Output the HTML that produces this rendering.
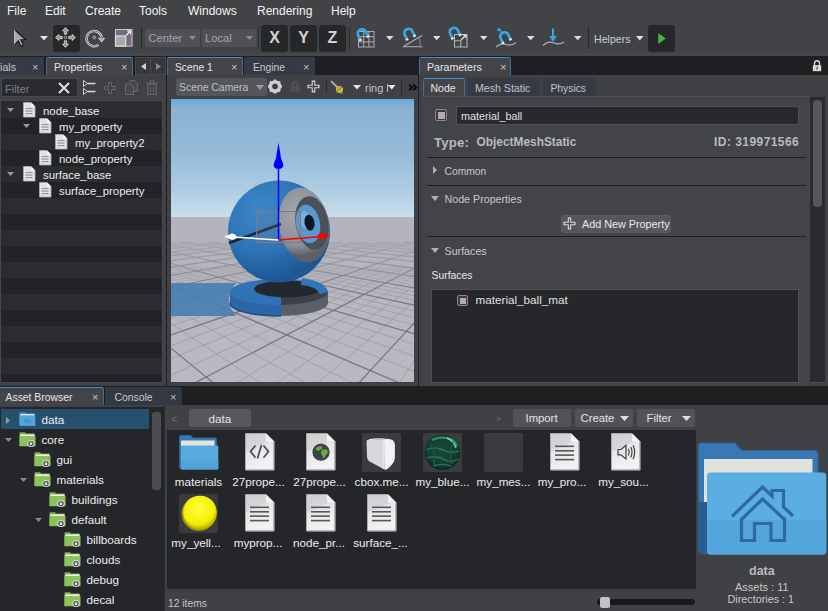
<!DOCTYPE html>
<html><head><meta charset="utf-8"><style>
html,body{margin:0;padding:0;}
body{width:828px;height:611px;overflow:hidden;position:relative;background:#424346;font-family:"Liberation Sans",sans-serif;}
.a{position:absolute;}
.t{white-space:nowrap;}
svg{overflow:visible;}
</style></head><body>
<div class="a" style="left:0px;top:0px;width:828px;height:22px;background:#424346;"></div>
<div class="a t" style="left:7px;top:4.84px;font-size:12px;line-height:12px;color:#f4f4f4;">File</div>
<div class="a t" style="left:45px;top:4.84px;font-size:12px;line-height:12px;color:#f4f4f4;">Edit</div>
<div class="a t" style="left:85px;top:4.84px;font-size:12px;line-height:12px;color:#f4f4f4;">Create</div>
<div class="a t" style="left:139px;top:4.84px;font-size:12px;line-height:12px;color:#f4f4f4;">Tools</div>
<div class="a t" style="left:188px;top:4.84px;font-size:12px;line-height:12px;color:#f4f4f4;">Windows</div>
<div class="a t" style="left:257px;top:4.84px;font-size:12px;line-height:12px;color:#f4f4f4;">Rendering</div>
<div class="a t" style="left:331px;top:4.84px;font-size:12px;line-height:12px;color:#f4f4f4;">Help</div>
<div class="a" style="left:0px;top:22px;width:828px;height:32px;background:#424346;"></div>
<div class="a" style="left:0px;top:54px;width:828px;height:1px;background:#4a4b4e;"></div>
<svg class="a" style="left:14px;top:29px;" width="13" height="18" viewBox="0 0 13 18"><path d="M0.5 0.8V15.5L4.3 11.8L7.1 17.2L9.5 16L6.8 10.8H11.8Z" fill="#a9a9b1"/><path d="M0.8 1L11.8 10.8H6.8L9.5 16L7.1 17.2L4.3 11.8L0.8 15.3" fill="none" stroke="#141416" stroke-width="1.1"/><path d="M0.6 1V15" stroke="#b8b8c0" stroke-width="1.1"/></svg>
<svg class="a" style="left:39.5px;top:35.8px;" width="8" height="4.5" viewBox="0 0 8 4.5"><path d="M0 0H8L4.0 4.5Z" fill="#e2e2e2"/></svg>
<div class="a" style="left:53px;top:25px;width:27px;height:27px;background:#262729;border-radius:3px;"></div>
<svg class="a" style="left:55px;top:27px;" width="21" height="21" viewBox="0 0 21 21"><g fill="#8c8c90" stroke="#d6d6d6" stroke-width="0.9" stroke-linejoin="round"><path d="M10.5 0.6L13.5 3.8H11.7V7.2H9.3V3.8H7.5Z"/><path d="M10.5 20.4L13.5 17.2H11.7V13.8H9.3V17.2H7.5Z"/><path d="M0.6 10.5L3.8 7.5V9.3H7.2V11.7H3.8V13.5Z"/><path d="M20.4 10.5L17.2 7.5V9.3H13.8V11.7H17.2V13.5Z"/></g><circle cx="10.5" cy="10.5" r="1.3" fill="none" stroke="#c8c8c8" stroke-width="0.8"/></svg>
<svg class="a" style="left:85px;top:28px;" width="21" height="20" viewBox="0 0 21 20"><path d="M13.5 16.8A7.6 7.6 0 1 1 16.6 9.2" fill="none" stroke="#d0d0d4" stroke-width="2.6"/><path d="M13.5 16.8A7.6 7.6 0 1 1 16.6 9.2" fill="none" stroke="#7a6a82" stroke-width="1"/><path d="M13.6 10.2H19.6L16.6 14.2Z" fill="#9a9aa0" stroke="#d8d8d8" stroke-width="0.9"/><circle cx="9.4" cy="9.4" r="1.3" fill="none" stroke="#c8c8c8" stroke-width="0.9"/></svg>
<svg class="a" style="left:115px;top:29px;" width="18" height="18" viewBox="0 0 18 18"><rect x="0.5" y="0.5" width="16.6" height="16.6" fill="#7b6a84" stroke="#c8c8cc" stroke-width="1"/><rect x="0.5" y="7" width="10.2" height="10.1" fill="#a8a8ae" stroke="#dedede" stroke-width="1.2"/><path d="M11 6.5L15.6 1.9M12.2 1.9H15.6V5.3" fill="none" stroke="#f0f0f0" stroke-width="1.2"/></svg>
<div class="a" style="left:141px;top:27px;width:1px;height:22px;background:#2a2b2e;"></div>
<div class="a" style="left:145px;top:29px;width:55px;height:18px;background:#505155;border-radius:2px;"></div>
<div class="a t" style="left:148.5px;top:33.02px;font-size:11.2px;line-height:11.2px;color:#a4a6ac;">Center</div>
<svg class="a" style="left:189px;top:35.5px;" width="7" height="4" viewBox="0 0 7 4"><path d="M0 0H7L3.5 4Z" fill="#8a8a90"/></svg>
<div class="a" style="left:202px;top:29px;width:54px;height:18px;background:#505155;border-radius:2px;"></div>
<div class="a t" style="left:205px;top:33.02px;font-size:11.2px;line-height:11.2px;color:#a4a6ac;">Local</div>
<svg class="a" style="left:246px;top:35.5px;" width="7" height="4" viewBox="0 0 7 4"><path d="M0 0H7L3.5 4Z" fill="#8a8a90"/></svg>
<div class="a" style="left:258px;top:27px;width:1px;height:22px;background:#2a2b2e;"></div>
<div class="a" style="left:261px;top:25px;width:27px;height:27px;background:#262729;border-radius:3px;"></div>
<div class="a t" style="left:261px;top:29.5px;width:27px;text-align:center;font-size:16px;line-height:16px;font-weight:bold;color:#d4d4d4;">X</div>
<div class="a" style="left:290px;top:25px;width:27px;height:27px;background:#262729;border-radius:3px;"></div>
<div class="a t" style="left:290px;top:29.5px;width:27px;text-align:center;font-size:16px;line-height:16px;font-weight:bold;color:#d4d4d4;">Y</div>
<div class="a" style="left:319px;top:25px;width:27px;height:27px;background:#262729;border-radius:3px;"></div>
<div class="a t" style="left:319px;top:29.5px;width:27px;text-align:center;font-size:16px;line-height:16px;font-weight:bold;color:#d4d4d4;">Z</div>
<div class="a" style="left:349px;top:27px;width:1px;height:22px;background:#2a2b2e;"></div>
<svg class="a" style="left:355px;top:28px;" width="21" height="20" viewBox="0 0 21 20"><g stroke="#ababab" stroke-width="1" fill="none"><rect x="3.5" y="3.5" width="15.5" height="15.5"/><path d="M8.7 3.5V19M13.9 3.5V19M3.5 8.7H19M3.5 13.9H19"/></g><g transform="translate(7.0 5.6) rotate(-25) scale(1.0)"><path d="M-4.2 5V0A4.2 4.2 0 0 1 4.2 0V5" fill="none" stroke="#3aa6dc" stroke-width="2.8"/><path d="M-4.2 4.2V6.2M4.2 4.2V6.2" stroke="#d8eef8" stroke-width="2.8"/></g></svg>
<svg class="a" style="left:386px;top:35.8px;" width="7.5" height="4.2" viewBox="0 0 7.5 4.2"><path d="M0 0H7.5L3.75 4.2Z" fill="#dedede"/></svg>
<svg class="a" style="left:402px;top:28px;" width="21" height="20" viewBox="0 0 21 20"><path d="M1 18.7H20.5M1 18.7L20 7.5" stroke="#b0b0b0" stroke-width="1.1" fill="none"/><path d="M16.5 9.6Q18.6 12.5 18 14.5M18 14.5V18" stroke="#9a8aa0" stroke-width="0.9" fill="none"/><g transform="translate(6.6 5.0) rotate(-25) scale(1.0)"><path d="M-4.2 5V0A4.2 4.2 0 0 1 4.2 0V5" fill="none" stroke="#3aa6dc" stroke-width="2.8"/><path d="M-4.2 4.2V6.2M4.2 4.2V6.2" stroke="#d8eef8" stroke-width="2.8"/></g></svg>
<svg class="a" style="left:432.5px;top:35.8px;" width="7.5" height="4.2" viewBox="0 0 7.5 4.2"><path d="M0 0H7.5L3.75 4.2Z" fill="#dedede"/></svg>
<svg class="a" style="left:448px;top:27px;" width="20" height="21" viewBox="0 0 20 21"><g stroke="#b0b0b0" stroke-width="1.1" fill="none"><rect x="6.5" y="7.5" width="12.5" height="12.5"/><path d="M6.5 13.8H12.8V20"/></g><path d="M13 13L18 8M14.8 8H18V11.2" stroke="#e8e8e8" stroke-width="1.1" fill="none"/><g transform="translate(6.0 5.0) rotate(-25) scale(1.0)"><path d="M-4.2 5V0A4.2 4.2 0 0 1 4.2 0V5" fill="none" stroke="#3aa6dc" stroke-width="2.8"/><path d="M-4.2 4.2V6.2M4.2 4.2V6.2" stroke="#d8eef8" stroke-width="2.8"/></g></svg>
<svg class="a" style="left:480px;top:36px;" width="7.5" height="4.2" viewBox="0 0 7.5 4.2"><path d="M0 0H7.5L3.75 4.2Z" fill="#dedede"/></svg>
<svg class="a" style="left:495px;top:27px;" width="22" height="21" viewBox="0 0 22 21"><path d="M1 20Q6 15.5 11 17.5Q16 19.5 21 15.5" stroke="#b0b0b0" stroke-width="1.2" fill="none"/><g transform="translate(9.5 9.5) rotate(-25) scale(1.0)"><path d="M-4.2 5V0A4.2 4.2 0 0 1 4.2 0V5" fill="none" stroke="#3aa6dc" stroke-width="2.8"/><path d="M-4.2 4.2V6.2M4.2 4.2V6.2" stroke="#d8eef8" stroke-width="2.8"/></g><path d="M7.5 7L4.2 2.2" stroke="#3aa6dc" stroke-width="1.4"/><path d="M1.8 4.2L3.2 0.6L6.4 2.6Z" fill="#3aa6dc"/></svg>
<svg class="a" style="left:527px;top:36px;" width="7.5" height="4.2" viewBox="0 0 7.5 4.2"><path d="M0 0H7.5L3.75 4.2Z" fill="#dedede"/></svg>
<svg class="a" style="left:542px;top:27px;" width="23" height="21" viewBox="0 0 23 21"><path d="M1 18.5Q6 13.5 11.5 15.8Q17 18.5 22 15" stroke="#b0b0b0" stroke-width="1.2" fill="none"/><path d="M11 1.5V10" stroke="#3aa6dc" stroke-width="2"/><path d="M7.2 9H14.8L11 15Z" fill="#3aa6dc"/></svg>
<svg class="a" style="left:574px;top:36px;" width="7.5" height="4.2" viewBox="0 0 7.5 4.2"><path d="M0 0H7.5L3.75 4.2Z" fill="#dedede"/></svg>
<div class="a" style="left:588px;top:27px;width:1px;height:22px;background:#2a2b2e;"></div>
<div class="a t" style="left:594px;top:33.83px;font-size:10.6px;line-height:10.6px;color:#c8ccd4;">Helpers</div>
<svg class="a" style="left:635.5px;top:36px;" width="7.5" height="4.5" viewBox="0 0 7.5 4.5"><path d="M0 0H7.5L3.75 4.5Z" fill="#e2e2e2"/></svg>
<div class="a" style="left:648px;top:25px;width:27px;height:27px;background:#262729;border-radius:3px;"></div>
<svg class="a" style="left:658px;top:33px;" width="8" height="11" viewBox="0 0 8 11"><path d="M0.5 0.5V10.5L7.5 5.5Z" fill="#3dc23d" stroke="#6a8a6a" stroke-width="0.6"/></svg>
<div class="a" style="left:0px;top:56px;width:828px;height:330px;background:#1f1f21;"></div>
<!--LEFT-->
<div class="a" style="left:0px;top:57px;width:44px;height:18px;background:#353a45;"></div>
<div class="a t" style="left:-27px;top:62.03px;font-size:10.6px;line-height:10.6px;color:#c8c8c8;">Materials</div>
<div class="a t" style="left:32px;top:62.19px;font-size:11px;line-height:11px;color:#c0c0c0;">&#215;</div>
<div class="a" style="left:46px;top:57px;width:87px;height:18px;background:#434448;border-top:1px solid #3f8fcf;border-left:1px solid #3a6f9a;border-right:1px solid #3a6f9a;box-sizing:border-box;border-radius:2px 2px 0 0;"></div>
<div class="a t" style="left:54px;top:62.03px;font-size:10.6px;line-height:10.6px;color:#e6e6e6;">Properties</div>
<div class="a t" style="left:121px;top:62.19px;font-size:11px;line-height:11px;color:#c8c8c8;">&#215;</div>
<div class="a" style="left:135px;top:57px;width:31px;height:18px;background:#37383b;border:1px solid #4a4b4f;box-sizing:border-box;"></div>
<div class="a" style="left:150px;top:58px;width:1px;height:16px;background:#4a4b4f;"></div>
<svg class="a" style="left:141px;top:63px;" width="5" height="7" viewBox="0 0 5 7"><path d="M5 0V7L0 3.5Z" fill="#d0d0d0"/></svg>
<svg class="a" style="left:156px;top:63px;" width="5" height="7" viewBox="0 0 5 7"><path d="M0 0V7L5 3.5Z" fill="#8a8a8a"/></svg>
<div class="a" style="left:0px;top:75px;width:166px;height:311px;background:#404144;"></div>
<div class="a" style="left:1px;top:78px;width:77px;height:19px;background:#2a2b2e;border:1px solid #48494d;box-sizing:border-box;"></div>
<div class="a t" style="left:5px;top:83.69px;font-size:11px;line-height:11px;color:#7c7f86;">Filter</div>
<svg class="a" style="left:58px;top:82px;" width="12" height="12" viewBox="0 0 12 12"><path d="M1 1L11 11M11 1L1 11" stroke="#e0e0e0" stroke-width="2"/></svg>
<svg class="a" style="left:82px;top:79px;" width="14" height="16" viewBox="0 0 14 16"><g fill="none" stroke="#d0d0d0" stroke-width="1"><path d="M1.5 1.5V7.5L5.5 4.5Z"/><path d="M1.5 9.5V15.5L5.5 12.5Z"/></g><path d="M5.5 4.5H13.5M5.5 12.5H13.5" stroke="#dcdcdc" stroke-width="1.3"/></svg>
<svg class="a" style="left:104px;top:82px;" width="12" height="12" viewBox="0 0 12 12"><path d="M4.5 0.5H7.5V4.5H11.5V7.5H7.5V11.5H4.5V7.5H0.5V4.5H4.5Z" fill="none" stroke="#66676c" stroke-width="1"/></svg>
<svg class="a" style="left:125px;top:80px;" width="13" height="15" viewBox="0 0 13 15"><path d="M5 0.5H9.5L12.5 3.5V11.5H5Z" fill="#48494e" stroke="#66676c" stroke-width="1"/><path d="M0.5 4H5.5L8.5 7V14.5H0.5Z" fill="#48494e" stroke="#66676c" stroke-width="1"/></svg>
<svg class="a" style="left:146px;top:80px;" width="12" height="15" viewBox="0 0 12 15"><path d="M0.5 3H11.5M4 3V1H8V3" stroke="#66676c" stroke-width="1.2" fill="none"/><path d="M1.8 4.5H10.2V14.3H1.8Z" fill="none" stroke="#66676c" stroke-width="1.2"/><path d="M4.5 6.5V12.5M7.5 6.5V12.5" stroke="#66676c" stroke-width="1"/></svg>
<div class="a" style="left:0px;top:100px;width:163px;height:283px;background:#2b2c2f;border:1px solid #48494c;box-sizing:border-box;"></div>
<div class="a" style="left:1px;top:102px;width:161px;height:16px;background:#2b2c2f;"></div>
<div class="a" style="left:1px;top:118px;width:161px;height:16px;background:#222326;"></div>
<div class="a" style="left:1px;top:134px;width:161px;height:16px;background:#2b2c2f;"></div>
<div class="a" style="left:1px;top:150px;width:161px;height:16px;background:#222326;"></div>
<div class="a" style="left:1px;top:166px;width:161px;height:16px;background:#2b2c2f;"></div>
<div class="a" style="left:1px;top:182px;width:161px;height:16px;background:#222326;"></div>
<div class="a" style="left:1px;top:198px;width:161px;height:16px;background:#2b2c2f;"></div>
<div class="a" style="left:1px;top:214px;width:161px;height:16px;background:#222326;"></div>
<div class="a" style="left:1px;top:230px;width:161px;height:16px;background:#2b2c2f;"></div>
<div class="a" style="left:1px;top:246px;width:161px;height:16px;background:#222326;"></div>
<div class="a" style="left:1px;top:262px;width:161px;height:16px;background:#2b2c2f;"></div>
<div class="a" style="left:1px;top:278px;width:161px;height:16px;background:#222326;"></div>
<div class="a" style="left:1px;top:294px;width:161px;height:16px;background:#2b2c2f;"></div>
<div class="a" style="left:1px;top:310px;width:161px;height:16px;background:#222326;"></div>
<div class="a" style="left:1px;top:326px;width:161px;height:16px;background:#2b2c2f;"></div>
<div class="a" style="left:1px;top:342px;width:161px;height:16px;background:#222326;"></div>
<div class="a" style="left:1px;top:358px;width:161px;height:16px;background:#2b2c2f;"></div>
<div class="a" style="left:1px;top:374px;width:161px;height:8px;background:#222326;"></div>
<svg class="a" style="left:7px;top:108px;" width="7" height="4" viewBox="0 0 7 4"><path d="M0 0H7L3.5 4Z" fill="#9a9a9a"/></svg>
<svg class="a" style="left:23px;top:102px" width="13" height="16" viewBox="0 0 13 16"><path d="M0.5 0.5H8L12 4.5V15H0.5Z" fill="#e2e2e4" stroke="#b0b0b4" stroke-width="0.8"/><path d="M8 0.5V4.5H12Z" fill="#f6f6f6"/><rect x="2.5" y="6" width="7" height="1.2" fill="#9a9aa0"/><rect x="2.5" y="8.5" width="7" height="1.2" fill="#9a9aa0"/><rect x="2.5" y="11" width="7" height="1.2" fill="#9a9aa0"/></svg>
<div class="a t" style="left:43px;top:105.85px;font-size:11.4px;line-height:11.4px;color:#ececec;">node_base</div>
<svg class="a" style="left:23px;top:124px;" width="7" height="4" viewBox="0 0 7 4"><path d="M0 0H7L3.5 4Z" fill="#9a9a9a"/></svg>
<svg class="a" style="left:39px;top:118px" width="13" height="16" viewBox="0 0 13 16"><path d="M0.5 0.5H8L12 4.5V15H0.5Z" fill="#e2e2e4" stroke="#b0b0b4" stroke-width="0.8"/><path d="M8 0.5V4.5H12Z" fill="#f6f6f6"/><rect x="2.5" y="6" width="7" height="1.2" fill="#9a9aa0"/><rect x="2.5" y="8.5" width="7" height="1.2" fill="#9a9aa0"/><rect x="2.5" y="11" width="7" height="1.2" fill="#9a9aa0"/></svg>
<div class="a t" style="left:59px;top:121.85px;font-size:11.4px;line-height:11.4px;color:#ececec;">my_property</div>
<svg class="a" style="left:55px;top:134px" width="13" height="16" viewBox="0 0 13 16"><path d="M0.5 0.5H8L12 4.5V15H0.5Z" fill="#e2e2e4" stroke="#b0b0b4" stroke-width="0.8"/><path d="M8 0.5V4.5H12Z" fill="#f6f6f6"/><rect x="2.5" y="6" width="7" height="1.2" fill="#9a9aa0"/><rect x="2.5" y="8.5" width="7" height="1.2" fill="#9a9aa0"/><rect x="2.5" y="11" width="7" height="1.2" fill="#9a9aa0"/></svg>
<div class="a t" style="left:75px;top:137.85px;font-size:11.4px;line-height:11.4px;color:#ececec;">my_property2</div>
<svg class="a" style="left:39px;top:150px" width="13" height="16" viewBox="0 0 13 16"><path d="M0.5 0.5H8L12 4.5V15H0.5Z" fill="#e2e2e4" stroke="#b0b0b4" stroke-width="0.8"/><path d="M8 0.5V4.5H12Z" fill="#f6f6f6"/><rect x="2.5" y="6" width="7" height="1.2" fill="#9a9aa0"/><rect x="2.5" y="8.5" width="7" height="1.2" fill="#9a9aa0"/><rect x="2.5" y="11" width="7" height="1.2" fill="#9a9aa0"/></svg>
<div class="a t" style="left:59px;top:153.85px;font-size:11.4px;line-height:11.4px;color:#ececec;">node_property</div>
<svg class="a" style="left:7px;top:172px;" width="7" height="4" viewBox="0 0 7 4"><path d="M0 0H7L3.5 4Z" fill="#9a9a9a"/></svg>
<svg class="a" style="left:23px;top:166px" width="13" height="16" viewBox="0 0 13 16"><path d="M0.5 0.5H8L12 4.5V15H0.5Z" fill="#e2e2e4" stroke="#b0b0b4" stroke-width="0.8"/><path d="M8 0.5V4.5H12Z" fill="#f6f6f6"/><rect x="2.5" y="6" width="7" height="1.2" fill="#9a9aa0"/><rect x="2.5" y="8.5" width="7" height="1.2" fill="#9a9aa0"/><rect x="2.5" y="11" width="7" height="1.2" fill="#9a9aa0"/></svg>
<div class="a t" style="left:43px;top:169.85px;font-size:11.4px;line-height:11.4px;color:#ececec;">surface_base</div>
<svg class="a" style="left:39px;top:182px" width="13" height="16" viewBox="0 0 13 16"><path d="M0.5 0.5H8L12 4.5V15H0.5Z" fill="#e2e2e4" stroke="#b0b0b4" stroke-width="0.8"/><path d="M8 0.5V4.5H12Z" fill="#f6f6f6"/><rect x="2.5" y="6" width="7" height="1.2" fill="#9a9aa0"/><rect x="2.5" y="8.5" width="7" height="1.2" fill="#9a9aa0"/><rect x="2.5" y="11" width="7" height="1.2" fill="#9a9aa0"/></svg>
<div class="a t" style="left:59px;top:185.85px;font-size:11.4px;line-height:11.4px;color:#ececec;">surface_property</div>
<!--SCENE-->
<div class="a" style="left:167px;top:57px;width:76px;height:18px;background:#434448;border-top:1px solid #3f8fcf;border-left:1px solid #3a6f9a;border-right:1px solid #3a6f9a;box-sizing:border-box;border-radius:2px 2px 0 0;"></div>
<div class="a t" style="left:175px;top:63.08px;font-size:10.3px;line-height:10.3px;color:#e6e6e6;">Scene 1</div>
<div class="a t" style="left:231px;top:62.19px;font-size:11px;line-height:11px;color:#c8c8c8;">&#215;</div>
<div class="a" style="left:244px;top:57px;width:71px;height:18px;background:#353a45;border-radius:2px 2px 0 0;"></div>
<div class="a t" style="left:253px;top:63.08px;font-size:10.3px;line-height:10.3px;color:#c8c8c8;">Engine</div>
<div class="a t" style="left:303px;top:62.19px;font-size:11px;line-height:11px;color:#c0c0c0;">&#215;</div>
<div class="a" style="left:167px;top:75px;width:251px;height:311px;background:#404144;"></div>
<div class="a" style="left:176px;top:78px;width:91px;height:18px;background:#55565a;border-radius:3px;"></div>
<div class="a t" style="left:179px;top:83.20px;font-size:10.4px;line-height:10.4px;color:#bcc0c6;">Scene Camera</div>
<svg class="a" style="left:256px;top:85px;" width="8" height="5" viewBox="0 0 8 5"><path d="M0 0H8L4.0 5Z" fill="#9a9a9a"/></svg>
<svg class="a" style="left:268px;top:79px;" width="14" height="15" viewBox="0 0 14 15"><g transform="translate(7 7.5)"><circle r="5" fill="none" stroke="#cfcfcf" stroke-width="2.6"/><g stroke="#cfcfcf" stroke-width="2.4"><path d="M0 -7V7M-7 0H7M-5 -5L5 5M5 -5L-5 5"/></g><circle r="2.8" fill="#3d3e42"/></g></svg>
<svg class="a" style="left:290px;top:81px;" width="10" height="11" viewBox="0 0 10 11"><path d="M2.5 5V3Q2.5 0.8 5 0.8Q7.5 0.8 7.5 3V5" fill="none" stroke="#58595e" stroke-width="1.2"/><rect x="0.5" y="5" width="9" height="5.5" fill="#4e4f54"/></svg>
<svg class="a" style="left:307px;top:80px;" width="13" height="13" viewBox="0 0 13 13"><path d="M6.5 0.5V12.5M0.5 6.5H12.5" stroke="#d8d8d8" stroke-width="3.6"/><path d="M6.5 1.8V11.2M1.8 6.5H11.2" stroke="#3d3e42" stroke-width="1.4"/></svg>
<div class="a" style="left:326px;top:80px;width:1px;height:14px;background:#2a2b2e;"></div>
<svg class="a" style="left:330px;top:80px;" width="14" height="14" viewBox="0 0 14 14"><path d="M1 1L8 8" stroke="#9a8aa8" stroke-width="2.2"/><path d="M1.5 1.5L8 8" stroke="#d0c8d8" stroke-width="0.8"/><circle cx="9.5" cy="9.5" r="3.6" fill="#c8b830"/><path d="M7 11L12 7" stroke="#6a6a40" stroke-width="1"/><path d="M10 13L13 13" stroke="#9a8aa8" stroke-width="1"/></svg>
<svg class="a" style="left:352.5px;top:84.5px;" width="8" height="4.5" viewBox="0 0 8 4.5"><path d="M0 0H8L4.0 4.5Z" fill="#e2e2e2"/></svg>
<div class="a t" style="left:365px;top:82.69px;font-size:11px;line-height:11px;color:#c0c0c4;">ring</div>
<div class="a" style="left:386.5px;top:84px;width:1.5px;height:8px;background:#c8c4a8;"></div>
<svg class="a" style="left:388px;top:84.7px;" width="7.5" height="4.5" viewBox="0 0 7.5 4.5"><path d="M0 0H7.5L3.75 4.5Z" fill="#f0f0f0"/></svg>
<div class="a" style="left:401px;top:79px;width:1px;height:16px;background:#2a2b2e;"></div>
<svg class="a" style="left:408px;top:84px;" width="10" height="7" viewBox="0 0 10 7"><path d="M1 0.8L4.2 3.5L1 6.2M5.2 0.8L8.4 3.5L5.2 6.2" fill="none" stroke="#0a0a0c" stroke-width="1.8"/></svg>
<svg class="a" style="left:0;top:0" width="828" height="611"><defs><linearGradient id="sky" x1="0" y1="99" x2="0" y2="217" gradientUnits="userSpaceOnUse"><stop offset="0" stop-color="#6ea8da"/><stop offset="0.04" stop-color="#78aed8"/><stop offset="0.08" stop-color="#8ab2d2"/><stop offset="0.45" stop-color="#94bad8"/><stop offset="0.8" stop-color="#b2cfe4"/><stop offset="1" stop-color="#cadeec"/></linearGradient><linearGradient id="floor" x1="0" y1="217" x2="0" y2="382" gradientUnits="userSpaceOnUse"><stop offset="0" stop-color="#aeaeb6"/><stop offset="0.3" stop-color="#b6b6be"/><stop offset="1" stop-color="#b9b9c1"/></linearGradient><radialGradient id="ball" cx="262" cy="210" r="70" gradientUnits="userSpaceOnUse"><stop offset="0" stop-color="#3a88c8"/><stop offset="0.6" stop-color="#2e74b4"/><stop offset="1" stop-color="#1d5894"/></radialGradient><radialGradient id="ring" cx="300" cy="215" r="40" gradientUnits="userSpaceOnUse"><stop offset="0" stop-color="#a8acb4"/><stop offset="0.75" stop-color="#8c9098"/><stop offset="1" stop-color="#5c6068"/></radialGradient><linearGradient id="haze" x1="0" y1="217" x2="0" y2="300" gradientUnits="userSpaceOnUse"><stop offset="0" stop-color="#b4b4bc" stop-opacity="1"/><stop offset="0.35" stop-color="#b4b4bc" stop-opacity="0.75"/><stop offset="1" stop-color="#b6b6be" stop-opacity="0"/></linearGradient><clipPath id="vpclip"><rect x="171" y="99" width="243" height="283"/></clipPath></defs><g clip-path="url(#vpclip)"><rect x="171" y="99" width="243" height="118" fill="url(#sky)"/><rect x="171" y="217" width="243" height="165" fill="url(#floor)"/><g fill="none"><path stroke="#96949e" stroke-width="0.9" opacity="0.7" d="M-1192 466L171 267M-1131 466L183 267M-1069 466L196 267M-1008 466L208 267M-946 466L220 267M-885 466L233 267M-823 466L245 267M-762 466L257 267M-701 466L269 267M-639 466L282 267M-578 466L294 267M-516 466L306 267M-455 466L319 267M-394 466L331 267M-332 466L343 267M-271 466L355 267M-209 466L368 267M-148 466L380 267M-87 466L392 267M-25 466L405 267M36 466L417 267M98 466L429 267M159 466L441 267M220 466L454 267M282 466L466 267M343 466L478 267M405 466L491 267"/><path stroke="#96949e" stroke-width="0.9" opacity="0.7" d="M176 466L44 267M246 466L58 267M315 466L72 267M385 466L86 267M454 466L100 267M524 466L114 267M594 466L128 267M663 466L141 267M733 466L155 267M802 466L169 267M872 466L183 267M941 466L197 267M1011 466L211 267M1080 466L225 267M1150 466L239 267M1219 466L253 267M1289 466L267 267M1358 466L280 267M1428 466L294 267M1497 466L308 267M1567 466L322 267M1636 466L336 267M1706 466L350 267M1775 466L364 267M1845 466L378 267M1915 466L392 267M1984 466L406 267"/><path stroke="#76707e" stroke-width="1.3" opacity="0.85" d="M-2666 466L194 242M-2420 466L219 242M-2174 466L243 242M-1929 466L268 242M-1683 466L292 242M-1438 466L317 242M-1192 466L342 242M-946 466L366 242M-701 466L391 242M-455 466L415 242M-209 466L440 242M36 466L464 242M282 466L489 242"/><path stroke="#76707e" stroke-width="1.3" opacity="0.85" d="M315 466L41 242M594 466L69 242M872 466L97 242M1150 466L125 242M1428 466L153 242M1706 466L180 242M1984 466L208 242M2262 466L236 242M2540 466L264 242M2818 466L292 242M3097 466L320 242M3375 466L347 242M3653 466L375 242M3931 466L403 242"/></g><rect x="171" y="217" width="243" height="83" fill="url(#haze)"/><path d="M171 283H236Q222 300 236 316H171Z" fill="#4a80b2" opacity="0.92"/><path d="M230 292V303A49 13 0 0 0 328 303V292Z" fill="#5a5e66"/><path d="M230 292V303A49 13 0 0 0 281 316V305A49 13 0 0 1 230 292Z" fill="#2a66a8"/><ellipse cx="279" cy="292" rx="49" ry="13" fill="#2f72b6"/><path d="M281 305A49 13 0 0 0 328 292L318 289L281 297Z" fill="#3c4048"/><ellipse cx="287" cy="289" rx="33" ry="8.5" fill="#23272e"/><path d="M302 278Q325 281 328 292L320 294Q316 286 301 285Z" fill="#3276ba"/><path d="M230 303A49 13 0 0 0 281 316" fill="none" stroke="#1e4e84" stroke-width="1.5"/><circle cx="279" cy="231.5" r="51" fill="url(#ball)"/><ellipse cx="304" cy="225" rx="25" ry="37.5" transform="rotate(-10 304 225)" fill="url(#ring)"/><ellipse cx="312" cy="223" rx="16.5" ry="27" transform="rotate(-10 312 223)" fill="#4c5058"/><ellipse cx="308" cy="224" rx="12" ry="19.5" transform="rotate(-10 308 224)" fill="#5898ce"/><ellipse cx="305" cy="220" rx="5" ry="9" transform="rotate(-10 305 220)" fill="#8cc0e8" opacity="0.6"/><ellipse cx="309.5" cy="222.7" rx="5" ry="8" transform="rotate(-10 309.5 222.7)" fill="#0a1826"/><path d="M229 243L281 224" stroke="#141a22" stroke-width="2.4" opacity="0.85"/><rect x="256.5" y="211.5" width="44" height="31" fill="#a08090" fill-opacity="0.15" stroke="#8a7482" stroke-width="1"/><path d="M278.5 168V240" stroke="#0000ff" stroke-width="1.5"/><path d="M278.5 142.5L281 158L283.5 165Q283 169 278.5 169Q274 169 273.5 165L276 158Z" fill="#0000ff"/><path d="M278.5 240L225 236.5" stroke="#ffffff" stroke-width="1.5"/><path d="M224.5 236.5L232 233.5Q236 234 236.5 236.8Q236 239.6 232 240Z" fill="#ffffff"/><path d="M278.5 240L322 236.5" stroke="#ff0000" stroke-width="1.5"/><path d="M330 236L322 233Q318 233.5 317.5 236.3Q318 239 322 239.5Z" fill="#ff0000"/></g></svg>
<!--PARAMS-->
<div class="a" style="left:419px;top:57px;width:92px;height:18px;background:#434448;border-top:1px solid #3f8fcf;border-left:1px solid #3a6f9a;border-right:1px solid #3a6f9a;box-sizing:border-box;border-radius:2px 2px 0 0;"></div>
<div class="a t" style="left:427px;top:62.03px;font-size:10.6px;line-height:10.6px;color:#e6e6e6;">Parameters</div>
<div class="a t" style="left:500px;top:62.19px;font-size:11px;line-height:11px;color:#c8c8c8;">&#215;</div>
<div class="a" style="left:419px;top:75px;width:409px;height:311px;background:#404144;"></div>
<div class="a" style="left:423px;top:78px;width:42px;height:18px;background:#434448;border-top:1px solid #3f8fcf;border-left:1px solid #3a6f9a;border-right:1px solid #3a6f9a;box-sizing:border-box;border-radius:2px 2px 0 0;"></div>
<div class="a t" style="left:430.5px;top:83.11px;font-size:10.5px;line-height:10.5px;color:#e6e6e6;">Node</div>
<div class="a" style="left:468px;top:78px;width:72px;height:18px;background:#353a45;border-radius:2px 2px 0 0;"></div>
<div class="a t" style="left:475px;top:83.03px;font-size:10.6px;line-height:10.6px;color:#c4c4c4;">Mesh Static</div>
<div class="a" style="left:543px;top:78px;width:53px;height:18px;background:#353a45;border-radius:2px 2px 0 0;"></div>
<div class="a t" style="left:550.5px;top:84.18px;font-size:10.3px;line-height:10.3px;color:#c4c4c4;">Physics</div>
<div class="a" style="left:423px;top:96px;width:387px;height:290px;background:#434447;border-top:1px solid #505155;box-sizing:border-box;"></div>
<div class="a" style="left:435px;top:109px;width:12px;height:12px;background:#3a3b3e;border:1px solid #9a80a0;box-sizing:border-box;border-radius:2px;"></div>
<div class="a" style="left:437.5px;top:111.5px;width:7px;height:7px;background:#b4acac;"></div>
<div class="a" style="left:456px;top:106px;width:343px;height:19px;background:#28292c;border:1px solid #505155;box-sizing:border-box;"></div>
<div class="a t" style="left:461px;top:110.86px;font-size:10.8px;line-height:10.8px;color:#e0e0e0;">material_ball</div>
<div class="a t" style="left:434px;top:135.83px;font-size:13.2px;line-height:13.2px;color:#b6bac2;font-weight:bold;letter-spacing:0.2px;">Type:</div>
<div class="a t" style="left:476.5px;top:136.93px;font-size:11.9px;line-height:11.9px;color:#b6bac2;font-weight:bold;">ObjectMeshStatic</div>
<div class="a t" style="left:714px;top:135.84px;font-size:12px;line-height:12px;color:#b6bac2;font-weight:bold;letter-spacing:0.45px;">ID: 319971566</div>
<div class="a" style="left:427px;top:157px;width:379px;height:1px;background:#1f2022;"></div>
<svg class="a" style="left:433px;top:166px;" width="4" height="8" viewBox="0 0 4 8"><path d="M0 0V8L4 4.0Z" fill="#b0b0b0"/></svg>
<div class="a t" style="left:444.5px;top:167.08px;font-size:10.3px;line-height:10.3px;color:#c8c8c8;">Common</div>
<div class="a" style="left:427px;top:185px;width:379px;height:1px;background:#1f2022;"></div>
<svg class="a" style="left:431px;top:196px;" width="8" height="5" viewBox="0 0 8 5"><path d="M0 0H8L4.0 5Z" fill="#b0b0b0"/></svg>
<div class="a t" style="left:444.5px;top:193.94px;font-size:10.7px;line-height:10.7px;color:#c8c8c8;">Node Properties</div>
<div class="a" style="left:561px;top:215px;width:110px;height:18px;background:#56575b;border-radius:3px;border:1px solid #5c5d61;box-sizing:border-box;"></div>
<div class="a t" style="left:582px;top:218.86px;font-size:10.8px;line-height:10.8px;color:#e8e8e8;">Add New Property</div>
<svg class="a" style="left:563px;top:217px;" width="13" height="13" viewBox="0 0 13 13"><path d="M6.5 0.5V12.5M0.5 6.5H12.5" stroke="#d8d8d8" stroke-width="3.4"/><path d="M6.5 1.8V11.2M1.8 6.5H11.2" stroke="#54555a" stroke-width="1.3"/></svg>
<div class="a" style="left:427px;top:236px;width:379px;height:1px;background:#1f2022;"></div>
<svg class="a" style="left:431px;top:248px;" width="8" height="5" viewBox="0 0 8 5"><path d="M0 0H8L4.0 5Z" fill="#b0b0b0"/></svg>
<div class="a t" style="left:444.5px;top:245.94px;font-size:10.7px;line-height:10.7px;color:#c8c8c8;">Surfaces</div>
<div class="a t" style="left:431.5px;top:271.20px;font-size:10.4px;line-height:10.4px;color:#e8e8e8;">Surfaces</div>
<div class="a" style="left:431px;top:289px;width:368px;height:94px;background:#26272a;border:1px solid #505155;box-sizing:border-box;"></div>
<div class="a" style="left:457px;top:295px;width:11px;height:11px;background:#3a3b3e;border:1px solid #9a80a0;box-sizing:border-box;border-radius:2px;"></div>
<div class="a" style="left:459.5px;top:297.5px;width:6px;height:6px;background:#b4acac;"></div>
<div class="a t" style="left:475.5px;top:294.10px;font-size:11.7px;line-height:11.7px;color:#e0e0e0;">material_ball_mat</div>
<div class="a" style="left:810px;top:97px;width:15px;height:286px;background:#2a2b2e;border-bottom:1px solid #505155;box-sizing:border-box;"></div>
<div class="a" style="left:813px;top:100px;width:9px;height:107px;background:#56575b;border-radius:4px;"></div>
<svg class="a" style="left:812px;top:60px;" width="10" height="12" viewBox="0 0 10 12"><path d="M2.5 5.5V3.5Q2.5 0.8 5 0.8Q7.5 0.8 7.5 3.5V5.5" fill="none" stroke="#d8d8d8" stroke-width="1.4"/><rect x="0.8" y="5.2" width="8.4" height="6" fill="#d8d8d8"/><rect x="4.4" y="7" width="1.4" height="2.6" fill="#555"/></svg>
<!--BOTTOM-->
<div class="a" style="left:0px;top:386px;width:828px;height:225px;background:#1f1f21;"></div>
<div class="a" style="left:0px;top:387px;width:104px;height:18px;background:#434448;border-top:1px solid #3f8fcf;border-right:1px solid #3a6f9a;box-sizing:border-box;border-radius:0 2px 0 0;"></div>
<div class="a t" style="left:5.5px;top:392.70px;font-size:10.4px;line-height:10.4px;color:#e6e6e6;">Asset Browser</div>
<div class="a t" style="left:92px;top:391.69px;font-size:11px;line-height:11px;color:#c8c8c8;">&#215;</div>
<div class="a" style="left:105px;top:387px;width:77px;height:18px;background:#323844;border-radius:0 3px 0 0;"></div>
<div class="a t" style="left:114.5px;top:392.70px;font-size:10.4px;line-height:10.4px;color:#c8c8c8;">Console</div>
<div class="a t" style="left:170px;top:391.69px;font-size:11px;line-height:11px;color:#c0c0c0;">&#215;</div>
<div class="a" style="left:0px;top:405px;width:828px;height:206px;background:#404144;"></div>
<div class="a" style="left:0px;top:407px;width:165px;height:204px;background:#252629;"></div>
<div class="a" style="left:1px;top:409px;width:148px;height:20px;background:#27506f;"></div>
<svg class="a" style="left:6px;top:417px;" width="4" height="7" viewBox="0 0 4 7"><path d="M0 0V7L4 3.5Z" fill="#9a9a9a"/></svg>
<svg class="a" style="left:19px;top:412px" width="17" height="15" viewBox="0 0 17 15"><path d="M0.5 1Q0.5 0.2 1.3 0.2H6L7 1.4H15.5Q16.2 1.4 16.2 2.2V13.5H0.5Z" fill="#3f8ccc"/><rect x="1.2" y="1.9" width="14" height="1.8" fill="#dfe6ea"/><path d="M0.5 3.4H16.2V13.2Q16.2 13.8 15.6 13.8H1Q0.5 13.8 0.5 13.2Z" fill="#52a6de"/><path d="M4.5 9.5Q8 6 12 9M6 11Q8.5 9 11 11" stroke="#3c86c4" stroke-width="1.2" fill="none"/></svg>
<div class="a t" style="left:41.5px;top:413.60px;font-size:11.7px;line-height:11.7px;color:#ececec;">data</div>
<svg class="a" style="left:5px;top:438px;" width="7" height="4" viewBox="0 0 7 4"><path d="M0 0H7L3.5 4Z" fill="#8a8a8a"/></svg>
<svg class="a" style="left:19px;top:432px" width="18" height="16" viewBox="0 0 18 16"><path d="M0.5 1.2Q0.5 0.3 1.4 0.3H6L7 1.6H15.2Q16 1.6 16 2.4V14H0.5Z" fill="#7cb04a"/><rect x="1.3" y="2.4" width="14" height="2.2" fill="#f0f2ea"/><path d="M0.5 4H16Q16.5 4 16.5 4.6V13.6Q16.5 14.2 16 14.2H1Q0.5 14.2 0.5 13.6Z" fill="#8cc25a"/><circle cx="12" cy="11.5" r="3.6" fill="#e8e8e8"/><circle cx="12" cy="11.5" r="2.7" fill="#4a4c50"/><rect x="10.8" y="10.8" width="2.4" height="2.2" fill="#e0e0e0"/><path d="M11.2 10.9V10Q12 9.2 12.8 10V10.9" stroke="#e0e0e0" stroke-width="0.6" fill="none"/></svg>
<div class="a t" style="left:41.5px;top:433.60px;font-size:11.7px;line-height:11.7px;color:#ececec;">core</div>
<svg class="a" style="left:34px;top:452px" width="18" height="16" viewBox="0 0 18 16"><path d="M0.5 1.2Q0.5 0.3 1.4 0.3H6L7 1.6H15.2Q16 1.6 16 2.4V14H0.5Z" fill="#7cb04a"/><rect x="1.3" y="2.4" width="14" height="2.2" fill="#f0f2ea"/><path d="M0.5 4H16Q16.5 4 16.5 4.6V13.6Q16.5 14.2 16 14.2H1Q0.5 14.2 0.5 13.6Z" fill="#8cc25a"/><circle cx="12" cy="11.5" r="3.6" fill="#e8e8e8"/><circle cx="12" cy="11.5" r="2.7" fill="#4a4c50"/><rect x="10.8" y="10.8" width="2.4" height="2.2" fill="#e0e0e0"/><path d="M11.2 10.9V10Q12 9.2 12.8 10V10.9" stroke="#e0e0e0" stroke-width="0.6" fill="none"/></svg>
<div class="a t" style="left:56.5px;top:453.60px;font-size:11.7px;line-height:11.7px;color:#ececec;">gui</div>
<svg class="a" style="left:20px;top:478px;" width="7" height="4" viewBox="0 0 7 4"><path d="M0 0H7L3.5 4Z" fill="#8a8a8a"/></svg>
<svg class="a" style="left:34px;top:472px" width="18" height="16" viewBox="0 0 18 16"><path d="M0.5 1.2Q0.5 0.3 1.4 0.3H6L7 1.6H15.2Q16 1.6 16 2.4V14H0.5Z" fill="#7cb04a"/><rect x="1.3" y="2.4" width="14" height="2.2" fill="#f0f2ea"/><path d="M0.5 4H16Q16.5 4 16.5 4.6V13.6Q16.5 14.2 16 14.2H1Q0.5 14.2 0.5 13.6Z" fill="#8cc25a"/><circle cx="12" cy="11.5" r="3.6" fill="#e8e8e8"/><circle cx="12" cy="11.5" r="2.7" fill="#4a4c50"/><rect x="10.8" y="10.8" width="2.4" height="2.2" fill="#e0e0e0"/><path d="M11.2 10.9V10Q12 9.2 12.8 10V10.9" stroke="#e0e0e0" stroke-width="0.6" fill="none"/></svg>
<div class="a t" style="left:56.5px;top:473.60px;font-size:11.7px;line-height:11.7px;color:#ececec;">materials</div>
<svg class="a" style="left:49px;top:492px" width="18" height="16" viewBox="0 0 18 16"><path d="M0.5 1.2Q0.5 0.3 1.4 0.3H6L7 1.6H15.2Q16 1.6 16 2.4V14H0.5Z" fill="#7cb04a"/><rect x="1.3" y="2.4" width="14" height="2.2" fill="#f0f2ea"/><path d="M0.5 4H16Q16.5 4 16.5 4.6V13.6Q16.5 14.2 16 14.2H1Q0.5 14.2 0.5 13.6Z" fill="#8cc25a"/><circle cx="12" cy="11.5" r="3.6" fill="#e8e8e8"/><circle cx="12" cy="11.5" r="2.7" fill="#4a4c50"/><rect x="10.8" y="10.8" width="2.4" height="2.2" fill="#e0e0e0"/><path d="M11.2 10.9V10Q12 9.2 12.8 10V10.9" stroke="#e0e0e0" stroke-width="0.6" fill="none"/></svg>
<div class="a t" style="left:71.5px;top:493.60px;font-size:11.7px;line-height:11.7px;color:#ececec;">buildings</div>
<svg class="a" style="left:35px;top:518px;" width="7" height="4" viewBox="0 0 7 4"><path d="M0 0H7L3.5 4Z" fill="#8a8a8a"/></svg>
<svg class="a" style="left:49px;top:512px" width="18" height="16" viewBox="0 0 18 16"><path d="M0.5 1.2Q0.5 0.3 1.4 0.3H6L7 1.6H15.2Q16 1.6 16 2.4V14H0.5Z" fill="#7cb04a"/><rect x="1.3" y="2.4" width="14" height="2.2" fill="#f0f2ea"/><path d="M0.5 4H16Q16.5 4 16.5 4.6V13.6Q16.5 14.2 16 14.2H1Q0.5 14.2 0.5 13.6Z" fill="#8cc25a"/><circle cx="12" cy="11.5" r="3.6" fill="#e8e8e8"/><circle cx="12" cy="11.5" r="2.7" fill="#4a4c50"/><rect x="10.8" y="10.8" width="2.4" height="2.2" fill="#e0e0e0"/><path d="M11.2 10.9V10Q12 9.2 12.8 10V10.9" stroke="#e0e0e0" stroke-width="0.6" fill="none"/></svg>
<div class="a t" style="left:71.5px;top:513.60px;font-size:11.7px;line-height:11.7px;color:#ececec;">default</div>
<svg class="a" style="left:64px;top:532px" width="18" height="16" viewBox="0 0 18 16"><path d="M0.5 1.2Q0.5 0.3 1.4 0.3H6L7 1.6H15.2Q16 1.6 16 2.4V14H0.5Z" fill="#7cb04a"/><rect x="1.3" y="2.4" width="14" height="2.2" fill="#f0f2ea"/><path d="M0.5 4H16Q16.5 4 16.5 4.6V13.6Q16.5 14.2 16 14.2H1Q0.5 14.2 0.5 13.6Z" fill="#8cc25a"/><circle cx="12" cy="11.5" r="3.6" fill="#e8e8e8"/><circle cx="12" cy="11.5" r="2.7" fill="#4a4c50"/><rect x="10.8" y="10.8" width="2.4" height="2.2" fill="#e0e0e0"/><path d="M11.2 10.9V10Q12 9.2 12.8 10V10.9" stroke="#e0e0e0" stroke-width="0.6" fill="none"/></svg>
<div class="a t" style="left:86.5px;top:533.60px;font-size:11.7px;line-height:11.7px;color:#ececec;">billboards</div>
<svg class="a" style="left:64px;top:552px" width="18" height="16" viewBox="0 0 18 16"><path d="M0.5 1.2Q0.5 0.3 1.4 0.3H6L7 1.6H15.2Q16 1.6 16 2.4V14H0.5Z" fill="#7cb04a"/><rect x="1.3" y="2.4" width="14" height="2.2" fill="#f0f2ea"/><path d="M0.5 4H16Q16.5 4 16.5 4.6V13.6Q16.5 14.2 16 14.2H1Q0.5 14.2 0.5 13.6Z" fill="#8cc25a"/><circle cx="12" cy="11.5" r="3.6" fill="#e8e8e8"/><circle cx="12" cy="11.5" r="2.7" fill="#4a4c50"/><rect x="10.8" y="10.8" width="2.4" height="2.2" fill="#e0e0e0"/><path d="M11.2 10.9V10Q12 9.2 12.8 10V10.9" stroke="#e0e0e0" stroke-width="0.6" fill="none"/></svg>
<div class="a t" style="left:86.5px;top:553.60px;font-size:11.7px;line-height:11.7px;color:#ececec;">clouds</div>
<svg class="a" style="left:64px;top:572px" width="18" height="16" viewBox="0 0 18 16"><path d="M0.5 1.2Q0.5 0.3 1.4 0.3H6L7 1.6H15.2Q16 1.6 16 2.4V14H0.5Z" fill="#7cb04a"/><rect x="1.3" y="2.4" width="14" height="2.2" fill="#f0f2ea"/><path d="M0.5 4H16Q16.5 4 16.5 4.6V13.6Q16.5 14.2 16 14.2H1Q0.5 14.2 0.5 13.6Z" fill="#8cc25a"/><circle cx="12" cy="11.5" r="3.6" fill="#e8e8e8"/><circle cx="12" cy="11.5" r="2.7" fill="#4a4c50"/><rect x="10.8" y="10.8" width="2.4" height="2.2" fill="#e0e0e0"/><path d="M11.2 10.9V10Q12 9.2 12.8 10V10.9" stroke="#e0e0e0" stroke-width="0.6" fill="none"/></svg>
<div class="a t" style="left:86.5px;top:573.60px;font-size:11.7px;line-height:11.7px;color:#ececec;">debug</div>
<svg class="a" style="left:64px;top:592px" width="18" height="16" viewBox="0 0 18 16"><path d="M0.5 1.2Q0.5 0.3 1.4 0.3H6L7 1.6H15.2Q16 1.6 16 2.4V14H0.5Z" fill="#7cb04a"/><rect x="1.3" y="2.4" width="14" height="2.2" fill="#f0f2ea"/><path d="M0.5 4H16Q16.5 4 16.5 4.6V13.6Q16.5 14.2 16 14.2H1Q0.5 14.2 0.5 13.6Z" fill="#8cc25a"/><circle cx="12" cy="11.5" r="3.6" fill="#e8e8e8"/><circle cx="12" cy="11.5" r="2.7" fill="#4a4c50"/><rect x="10.8" y="10.8" width="2.4" height="2.2" fill="#e0e0e0"/><path d="M11.2 10.9V10Q12 9.2 12.8 10V10.9" stroke="#e0e0e0" stroke-width="0.6" fill="none"/></svg>
<div class="a t" style="left:86.5px;top:593.60px;font-size:11.7px;line-height:11.7px;color:#ececec;">decal</div>
<div class="a" style="left:149px;top:409px;width:15px;height:202px;background:#252629;"></div>
<div class="a" style="left:152px;top:412px;width:9px;height:78px;background:#4c4d51;border-radius:3px;"></div>
<div class="a" style="left:164px;top:405px;width:1px;height:206px;background:#2a2b2e;"></div>
<div class="a" style="left:189px;top:409px;width:62px;height:18px;background:#56575a;border-radius:3px;"></div>
<div class="a t" style="left:208.5px;top:413.10px;font-size:11.7px;line-height:11.7px;color:#e4e4e4;">data</div>
<div class="a t" style="left:171px;top:413.69px;font-size:11px;line-height:11px;color:#6a6b70;">&lt;</div>
<div class="a t" style="left:496px;top:415.38px;font-size:9px;line-height:9px;color:#6a6b70;">&gt;</div>
<div class="a" style="left:513px;top:409px;width:58px;height:18px;background:#525357;border-radius:2px;"></div>
<div class="a" style="left:575px;top:409px;width:58px;height:18px;background:#525357;border-radius:2px;"></div>
<div class="a" style="left:637px;top:409px;width:58px;height:18px;background:#525357;border-radius:2px;"></div>
<div class="a t" style="left:525.5px;top:412.93px;font-size:11.3px;line-height:11.3px;color:#e4e4e4;">Import</div>
<div class="a t" style="left:580.5px;top:412.93px;font-size:11.3px;line-height:11.3px;color:#e4e4e4;">Create</div>
<svg class="a" style="left:620px;top:416px;" width="9" height="5" viewBox="0 0 9 5"><path d="M0 0H9L4.5 5Z" fill="#e0e0e0"/></svg>
<div class="a t" style="left:646.5px;top:412.93px;font-size:11.3px;line-height:11.3px;color:#e4e4e4;">Filter</div>
<svg class="a" style="left:682px;top:416px;" width="9" height="5" viewBox="0 0 9 5"><path d="M0 0H9L4.5 5Z" fill="#e0e0e0"/></svg>
<div class="a" style="left:167px;top:430px;width:529px;height:159px;background:#252629;"></div>
<svg class="a" style="left:179px;top:435px" width="40" height="35" viewBox="0 0 40 35"><path d="M0.5 2Q0.5 0.5 2 0.5H12L14 3H36Q37.5 3 37.5 4.5V33.5H0.5Z" fill="#3b79b6" stroke="#2f68a2" stroke-width="0.8"/><rect x="2" y="5.5" width="33.5" height="6" fill="#e2e4e0"/><path d="M3.5 10.5H38Q39.3 10.5 39.3 12V33Q39.3 34.5 38 34.5H3.5Q2 34.5 2 33V12Q2 10.5 3.5 10.5Z" fill="#58aadd"/><path d="M2 26H39.3V33Q39.3 34.5 38 34.5H3.5Q2 34.5 2 33Z" fill="#4fa2d8" opacity="0.8"/></svg>
<svg class="a" style="left:245px;top:433px" width="31" height="39" viewBox="0 0 31 39"><defs><linearGradient id="dg" x1="0" y1="0" x2="0.35" y2="1"><stop offset="0" stop-color="#cfcfd1"/><stop offset="0.42" stop-color="#d6d6d8"/><stop offset="0.48" stop-color="#e6e6e8"/><stop offset="1" stop-color="#f2f2f2"/></linearGradient></defs><path d="M0.5 0.5H21L29 8.5V37H0.5Z" fill="url(#dg)" stroke="#b8b4bc" stroke-width="0.8"/><path d="M29 8.5V37H1.5" fill="none" stroke="#9a9a9e" stroke-width="1"/><path d="M21 0.5V8.5H29Z" fill="#f4f4f4"/><path d="M10.5 12.5L5.5 18.6L10.5 24.7M18.5 12.5L23.5 18.6L18.5 24.7M16.5 11.8L12.5 25.5" fill="none" stroke="#4a4a58" stroke-width="1.7"/></svg>
<svg class="a" style="left:306px;top:433px" width="31" height="39" viewBox="0 0 31 39"><defs><linearGradient id="dg" x1="0" y1="0" x2="0.35" y2="1"><stop offset="0" stop-color="#cfcfd1"/><stop offset="0.42" stop-color="#d6d6d8"/><stop offset="0.48" stop-color="#e6e6e8"/><stop offset="1" stop-color="#f2f2f2"/></linearGradient></defs><path d="M0.5 0.5H21L29 8.5V37H0.5Z" fill="url(#dg)" stroke="#b8b4bc" stroke-width="0.8"/><path d="M29 8.5V37H1.5" fill="none" stroke="#9a9a9e" stroke-width="1"/><path d="M21 0.5V8.5H29Z" fill="#f4f4f4"/><circle cx="15" cy="19.2" r="8.6" fill="#3e424a"/><path d="M9.5 15.5Q12 12.5 15 13Q17 14.5 15.5 16.5Q13.5 16 12.5 18Q10.5 18 9.5 15.5Z" fill="#62b03a"/><path d="M16 17Q19.5 15.5 21.5 17.5Q22.5 20 20.5 21.5Q19 24.5 17 25.5Q16.5 22 15 20.5Q15 18 16 17Z" fill="#62b03a"/></svg>
<div class="a" style="left:362px;top:433px;width:39px;height:39px;background:#3a3b3f;border-radius:2px;"></div>
<svg class="a" style="left:362px;top:433px" width="39" height="39" viewBox="0 0 39 39"><path d="M4.5 8.5Q4.3 6.5 7 6.8Q14 6.2 22 6.6L22.5 36.5Q15 32.5 7.5 28.5Q5.5 27.5 5 24Z" fill="#d8d8dc"/><path d="M22 6.6Q28 6.5 31 7.8Q33 9 32.9 12V25Q32.5 30 26 35.5Q24 37 22.5 36.5Z" fill="#f2f2f4"/><path d="M21.5 7V36" stroke="#e4e4e8" stroke-width="2"/><path d="M7 6.8Q14 5.5 22 6.2Q28 6.4 31 7.8" stroke="#ececee" stroke-width="1.2" fill="none"/></svg>
<div class="a" style="left:423px;top:433px;width:39px;height:39px;background:#3a3b3f;border-radius:2px;"></div>
<svg class="a" style="left:423px;top:433px" width="39" height="39" viewBox="0 0 39 39"><defs><radialGradient id="gs" cx="0.5" cy="0.45" r="0.55"><stop offset="0" stop-color="#1c4a3c"/><stop offset="0.8" stop-color="#123a30"/><stop offset="1" stop-color="#0a2420"/></radialGradient></defs><circle cx="19.4" cy="19.2" r="17.8" fill="url(#gs)"/><path d="M9 7Q19 2.5 29 6.5Q33 9.5 34 13" stroke="#3aa070" stroke-width="2.2" fill="none" opacity="0.8"/><path d="M24 5Q31 8 33 15" stroke="#7ad0a8" stroke-width="1.6" fill="none"/><path d="M3 17Q12 13 20 17Q28 21 36 18M4 25Q14 22 22 27Q30 30 35 26M10 33Q19 30 28 33" stroke="#2a7a58" stroke-width="1.6" fill="none" opacity="0.85"/><path d="M7 10Q13 20 11 32M30 9Q26 20 29 31" stroke="#1e5a44" stroke-width="1.3" fill="none"/></svg>
<div class="a" style="left:484px;top:433px;width:39px;height:39px;background:#3a3b3f;border-radius:2px;"></div>
<svg class="a" style="left:550px;top:433px" width="31" height="39" viewBox="0 0 31 39"><defs><linearGradient id="dg" x1="0" y1="0" x2="0.35" y2="1"><stop offset="0" stop-color="#cfcfd1"/><stop offset="0.42" stop-color="#d6d6d8"/><stop offset="0.48" stop-color="#e6e6e8"/><stop offset="1" stop-color="#f2f2f2"/></linearGradient></defs><path d="M0.5 0.5H21L29 8.5V37H0.5Z" fill="url(#dg)" stroke="#b8b4bc" stroke-width="0.8"/><path d="M29 8.5V37H1.5" fill="none" stroke="#9a9a9e" stroke-width="1"/><path d="M21 0.5V8.5H29Z" fill="#f4f4f4"/><rect x="5" y="12.5" width="19" height="1.6" fill="#56565e"/><rect x="5" y="17" width="19" height="1.6" fill="#56565e"/><rect x="5" y="21.3" width="19" height="1.6" fill="#56565e"/><rect x="5" y="25.8" width="19" height="1.6" fill="#56565e"/></svg>
<svg class="a" style="left:611px;top:433px" width="31" height="39" viewBox="0 0 31 39"><defs><linearGradient id="dg" x1="0" y1="0" x2="0.35" y2="1"><stop offset="0" stop-color="#cfcfd1"/><stop offset="0.42" stop-color="#d6d6d8"/><stop offset="0.48" stop-color="#e6e6e8"/><stop offset="1" stop-color="#f2f2f2"/></linearGradient></defs><path d="M0.5 0.5H21L29 8.5V37H0.5Z" fill="url(#dg)" stroke="#b8b4bc" stroke-width="0.8"/><path d="M29 8.5V37H1.5" fill="none" stroke="#9a9a9e" stroke-width="1"/><path d="M21 0.5V8.5H29Z" fill="#f4f4f4"/><path d="M7 16.5H10L15 12.2V26L10 21.8H7Z" fill="none" stroke="#3e3e48" stroke-width="1.2"/><path d="M17.5 16Q19 19.2 17.5 22.4M19.8 14Q22.2 19.2 19.8 24.4M22.1 12.2Q25.2 19.2 22.1 26.2" fill="none" stroke="#3e3e48" stroke-width="1.2"/></svg>
<div class="a" style="left:179px;top:494px;width:39px;height:39px;background:#3a3b3f;border-radius:2px;"></div>
<svg class="a" style="left:180px;top:495px" width="38" height="38" viewBox="0 0 38 38"><defs><radialGradient id="ys" cx="0.45" cy="0.38" r="0.62"><stop offset="0" stop-color="#ffff40"/><stop offset="0.75" stop-color="#f2f000"/><stop offset="1" stop-color="#b8b000"/></radialGradient></defs><circle cx="19" cy="18.5" r="17.5" fill="#9a9400"/><circle cx="20" cy="17.5" r="16.8" fill="url(#ys)"/></svg>
<svg class="a" style="left:245px;top:494px" width="31" height="39" viewBox="0 0 31 39"><defs><linearGradient id="dg" x1="0" y1="0" x2="0.35" y2="1"><stop offset="0" stop-color="#cfcfd1"/><stop offset="0.42" stop-color="#d6d6d8"/><stop offset="0.48" stop-color="#e6e6e8"/><stop offset="1" stop-color="#f2f2f2"/></linearGradient></defs><path d="M0.5 0.5H21L29 8.5V37H0.5Z" fill="url(#dg)" stroke="#b8b4bc" stroke-width="0.8"/><path d="M29 8.5V37H1.5" fill="none" stroke="#9a9a9e" stroke-width="1"/><path d="M21 0.5V8.5H29Z" fill="#f4f4f4"/><rect x="5" y="12.5" width="19" height="1.6" fill="#56565e"/><rect x="5" y="17" width="19" height="1.6" fill="#56565e"/><rect x="5" y="21.3" width="19" height="1.6" fill="#56565e"/><rect x="5" y="25.8" width="19" height="1.6" fill="#56565e"/></svg>
<svg class="a" style="left:306px;top:494px" width="31" height="39" viewBox="0 0 31 39"><defs><linearGradient id="dg" x1="0" y1="0" x2="0.35" y2="1"><stop offset="0" stop-color="#cfcfd1"/><stop offset="0.42" stop-color="#d6d6d8"/><stop offset="0.48" stop-color="#e6e6e8"/><stop offset="1" stop-color="#f2f2f2"/></linearGradient></defs><path d="M0.5 0.5H21L29 8.5V37H0.5Z" fill="url(#dg)" stroke="#b8b4bc" stroke-width="0.8"/><path d="M29 8.5V37H1.5" fill="none" stroke="#9a9a9e" stroke-width="1"/><path d="M21 0.5V8.5H29Z" fill="#f4f4f4"/><rect x="5" y="12.5" width="19" height="1.6" fill="#56565e"/><rect x="5" y="17" width="19" height="1.6" fill="#56565e"/><rect x="5" y="21.3" width="19" height="1.6" fill="#56565e"/><rect x="5" y="25.8" width="19" height="1.6" fill="#56565e"/></svg>
<svg class="a" style="left:367px;top:494px" width="31" height="39" viewBox="0 0 31 39"><defs><linearGradient id="dg" x1="0" y1="0" x2="0.35" y2="1"><stop offset="0" stop-color="#cfcfd1"/><stop offset="0.42" stop-color="#d6d6d8"/><stop offset="0.48" stop-color="#e6e6e8"/><stop offset="1" stop-color="#f2f2f2"/></linearGradient></defs><path d="M0.5 0.5H21L29 8.5V37H0.5Z" fill="url(#dg)" stroke="#b8b4bc" stroke-width="0.8"/><path d="M29 8.5V37H1.5" fill="none" stroke="#9a9a9e" stroke-width="1"/><path d="M21 0.5V8.5H29Z" fill="#f4f4f4"/><rect x="5" y="12.5" width="19" height="1.6" fill="#56565e"/><rect x="5" y="17" width="19" height="1.6" fill="#56565e"/><rect x="5" y="21.3" width="19" height="1.6" fill="#56565e"/><rect x="5" y="25.8" width="19" height="1.6" fill="#56565e"/></svg>
<div class="a t" style="left:168.5px;top:476.10px;width:60px;text-align:center;font-size:11.7px;line-height:11.7px;color:#ececec;">materials</div>
<div class="a t" style="left:228.5px;top:476.10px;width:60px;text-align:center;font-size:11.7px;line-height:11.7px;color:#ececec;">27prope...</div>
<div class="a t" style="left:289.5px;top:476.10px;width:60px;text-align:center;font-size:11.7px;line-height:11.7px;color:#ececec;">27prope...</div>
<div class="a t" style="left:351.5px;top:476.10px;width:60px;text-align:center;font-size:11.7px;line-height:11.7px;color:#ececec;">cbox.me...</div>
<div class="a t" style="left:412.5px;top:476.10px;width:60px;text-align:center;font-size:11.7px;line-height:11.7px;color:#ececec;">my_blue...</div>
<div class="a t" style="left:473.5px;top:476.10px;width:60px;text-align:center;font-size:11.7px;line-height:11.7px;color:#ececec;">my_mes...</div>
<div class="a t" style="left:532.0px;top:476.10px;width:60px;text-align:center;font-size:11.7px;line-height:11.7px;color:#ececec;">my_pro...</div>
<div class="a t" style="left:593.5px;top:476.10px;width:60px;text-align:center;font-size:11.7px;line-height:11.7px;color:#ececec;">my_sou...</div>
<div class="a t" style="left:166.0px;top:537.10px;width:60px;text-align:center;font-size:11.7px;line-height:11.7px;color:#ececec;">my_yell...</div>
<div class="a t" style="left:228.0px;top:537.10px;width:60px;text-align:center;font-size:11.7px;line-height:11.7px;color:#ececec;">myprop...</div>
<div class="a t" style="left:289.0px;top:537.10px;width:60px;text-align:center;font-size:11.7px;line-height:11.7px;color:#ececec;">node_pr...</div>
<div class="a t" style="left:350.5px;top:537.10px;width:60px;text-align:center;font-size:11.7px;line-height:11.7px;color:#ececec;">surface_...</div>
<div class="a t" style="left:168px;top:599.28px;font-size:10.3px;line-height:10.3px;color:#c4c4c4;">12 items</div>
<div class="a" style="left:597px;top:599px;width:98px;height:6px;background:#19191b;border-radius:3px;"></div>
<div class="a" style="left:600px;top:597px;width:10px;height:11px;background:#c4c0c8;border-radius:2px;"></div>
<div class="a" style="left:696px;top:405px;width:132px;height:206px;background:#404144;"></div>
<svg class="a" style="left:697px;top:442px" width="131" height="114" viewBox="0 0 131 114"><path d="M1.5 4Q1.5 1 4.5 1H38L44.5 8.5H117Q121 8.5 121 12.5V108H1.5Z" fill="#3a78b4" stroke="#2e66a0" stroke-width="1.2"/><rect x="7" y="17" width="108.5" height="80" fill="#e0e2de"/><path d="M1.5 60V106Q1.5 112 7 112.5H10V60Z" fill="#2a5c90"/><path d="M13.5 30.5H126Q129.3 30.5 129.3 34V109Q129.3 112.5 126 112.5H13.5Q10 112.5 10 109V34Q10 30.5 13.5 30.5Z" fill="#5aaee2"/><path d="M10 78H129.3V109Q129.3 112.5 126 112.5H13.5Q10 112.5 10 109Z" fill="#52a6dc"/><g fill="none" stroke="#2f68a4" stroke-width="3.2" stroke-linejoin="miter"><path d="M35 74.5L65.5 45L75 54V48.5H86.5V65L96 74"/><path d="M44.5 77.5L65.5 57L87.5 77.5"/><path d="M44.5 75.5V98.5H57.5V81.5H74V98.5H87.5V75.5"/></g></svg>
<div class="a t" style="left:749px;top:565.42px;font-size:12.5px;line-height:12.5px;color:#b4b8c0;font-weight:bold;">data</div>
<div class="a t" style="left:735px;top:582.19px;font-size:11px;line-height:11px;color:#c8c8c8;">Assets : 11</div>
<div class="a t" style="left:727.5px;top:594.36px;font-size:10.8px;line-height:10.8px;color:#c8c8c8;">Directories : 1</div>
</body></html>
